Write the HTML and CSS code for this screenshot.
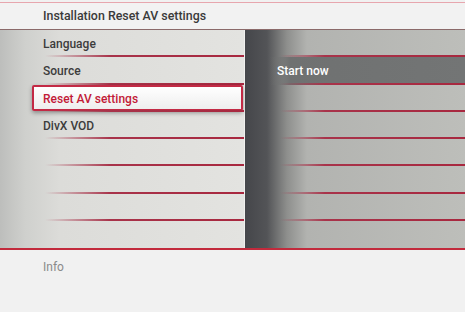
FILE: index.html
```html
<!DOCTYPE html>
<html lang="en">
<head>
  <meta charset="UTF-8">
  <title>Installation Reset AV settings</title>
  <link rel="stylesheet" href="styles.css">
</head>
<body>
  <div class="screen">
    <div class="header">Installation Reset AV settings</div>

    <div class="menu">
      <div class="panel left">
        <div class="row"><span>Language</span></div>
        <div class="row"><span>Source</span></div>
        <div class="row selected"><span>Reset AV settings</span></div>
        <div class="row"><span>DivX VOD</span></div>
        <div class="row"></div>
        <div class="row"></div>
        <div class="row"></div>
        <div class="row last"></div>
      </div>
      <div class="panel right">
        <div class="row"></div>
        <div class="row active"><span>Start now</span></div>
        <div class="row"></div>
        <div class="row"></div>
        <div class="row"></div>
        <div class="row"></div>
        <div class="row"></div>
        <div class="row last"></div>
      </div>
    </div>

    <div class="footer">Info</div>
  </div>
</body>
</html>
```

FILE: styles.css
```css
/* Base */
body {
  margin: 0;
  background-color: #f1f1f1;
  font-family: 'Roboto', 'Liberation Sans', sans-serif;
  font-size: 12px;
}

.screen {
  width: 465px;
  height: 312px;
  overflow: hidden;
}

/* Header */
.header {
  height: 26px;
  margin-top: 2px;
  border-top: 1px solid #e7a6ae;
  border-bottom: 1px solid #8b6a6a;
  padding-left: 43px;
  line-height: 25px;
  font-size: 12.4px;
  font-weight: 500;
  color: #3a3a3a;
  background-color: #f2f2f2;
}

/* Menu panels */
.menu {
  display: grid;
  grid-template-columns: 245px 1fr;
  height: 218px;
  border-bottom: 2px solid #c22a3c;
}

.panel {
  display: grid;
  grid-template-rows: repeat(8, 1fr);
}

.left {
  background: linear-gradient(to right, #bdbebc 0, #cfd0cd 25px, #dcdcd9 60px, #e3e3e0 100%);
  border-right: 1px solid #f0f0ee;
}

.right {
  background: linear-gradient(to right, #45464a 0, #535457 22px, #8e8f8d 42px, #b2b3b0 62px, #bdbeba 100%);
}

.row {
  position: relative;
  display: flex;
  align-items: center;
  padding-left: 43px;
  padding-top: 1px;
  font-weight: 500;
  color: #3c3c3c;
}

.row::after {
  content: '';
  position: absolute;
  left: 0;
  right: 0;
  bottom: 0;
  height: 2px;
  background: linear-gradient(to right, rgba(168, 40, 64, 0) 45px, #a8334a 110px, #a8283f 100%);
}

.row.last::after {
  display: none;
}

/* Selected item */
.row.selected {
  color: #c21a37;
}

.row.selected::before {
  content: '';
  position: absolute;
  left: 32px;
  right: 1px;
  top: 0;
  bottom: 1px;
  border: 2px solid #c32a45;
  border-radius: 2px;
  background: linear-gradient(to bottom, #ffffff, #eeeeee);
  box-shadow: 0 2px 4px rgba(0, 0, 0, 0.35);
}

.row.selected span {
  position: relative;
}

/* Right column */
.right .row {
  padding-left: 32px;
}

.right .row::after {
  background: linear-gradient(to right, rgba(168, 40, 64, 0) 35px, #a8334a 80px, #a8283f 100%);
}

.right .row.active {
  color: #ffffff;
}

.right .row.active::before {
  content: '';
  position: absolute;
  left: 25px;
  right: 0;
  top: 0;
  bottom: 0;
  background: linear-gradient(to right, rgba(110, 112, 112, 0) 0, #6f7171 20px, #737575 100%);
}

.right .row.active span {
  position: relative;
}

/* Footer */
.footer {
  padding: 10px 0 0 43px;
  color: #8a8a8a;
}
```
